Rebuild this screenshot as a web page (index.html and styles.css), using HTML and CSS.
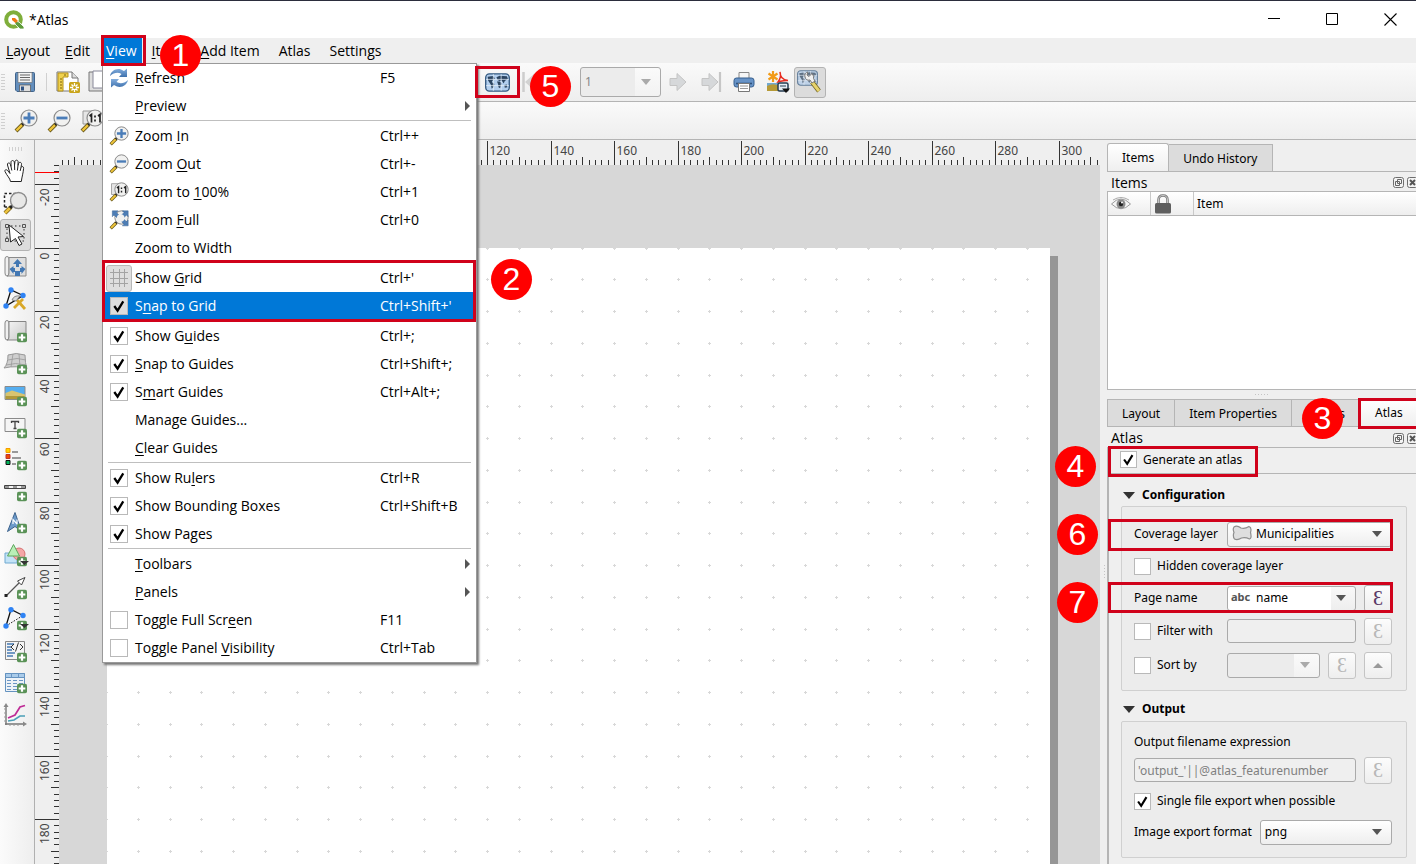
FILE: index.html
```html
<!DOCTYPE html>
<html lang="en">
<head>
<meta charset="utf-8">
<title>*Atlas</title>
<link rel="stylesheet" href="styles.css">
</head>
<body>
<svg class="defs" width="0" height="0" aria-hidden="true">
  <defs>
    <linearGradient id="gPaper" x1="0" y1="0" x2="1" y2="1"><stop offset="0" stop-color="#f4f4f4"/><stop offset="1" stop-color="#c9c9c9"/></linearGradient>
    <linearGradient id="gBlue" x1="0" y1="0" x2="0" y2="1"><stop offset="0" stop-color="#84aede"/><stop offset="1" stop-color="#3f72ad"/></linearGradient>
    <symbol id="plus" viewBox="0 0 9 9"><rect width="9" height="9" rx="2" fill="#5a9257"/><path d="M4.5 1.500v6M1.500 4.500h6" stroke="#fff" stroke-width="2"/></symbol>
    <symbol id="lens" viewBox="0 0 24 24"><path d="M2 22l7-7" stroke="#6b5a1c" stroke-width="4"/><path d="M2.500 21.500l6-6" stroke="#f0c63a" stroke-width="2.400"/><path d="M8 16l3-3" stroke="#222" stroke-width="2.500"/><circle cx="15" cy="9" r="8" fill="#f1f1f0" stroke="#8b8b8b" stroke-width="1.200"/></symbol>
    <symbol id="zin" viewBox="0 0 24 24"><use href="#lens"/><path d="M15 3.500v11M9.500 9h11" stroke="#4b7db8" stroke-width="2.800"/></symbol>
    <symbol id="zout" viewBox="0 0 24 24"><use href="#lens"/><path d="M9.500 9h11" stroke="#4b7db8" stroke-width="2.800"/></symbol>
    <symbol id="z11" viewBox="0 0 24 24"><path d="M3 2h12v13H3z" fill="#e6e6e6" stroke="#999"/><use href="#lens"/><path d="M9.500 7l2-1.500v8M18 7l2-1.500v8M15 6.500v2M15 10.500v2" fill="none" stroke="#222" stroke-width="1.700"/></symbol>
    <symbol id="zfull" viewBox="0 0 24 24"><use href="#lens"/><path d="M4 1h7L9 3l3 3-3 3-3-3-2 2zM23 1v7l-2-2-3 3-3-3 3-3-2-2zM23 19h-7l2-2-3-3 3-3 3 3 2-2z" fill="#4d7db5" stroke="#3f6795" stroke-width=".6"/><circle cx="14" cy="9.500" r="4.500" fill="#f1f1f0"/></symbol>
    <symbol id="refresh" viewBox="0 0 20 20"><path d="M1 8C2 3 7 0 12 1.500l3 1.500 3-2.500V9h-8l2.500-3C9 4 5 4.500 1 8z" fill="url(#gBlue)"/><path d="M19 12c-1 5-6 8-11 6.500L5 17l-3 2.500V11h8l-2.500 3c3.500 2 7.500 1.500 11.500-2z" fill="url(#gBlue)"/></symbol>
    <symbol id="grid" viewBox="0 0 18 18"><path d="M3.500 0v18M9.500 0v18M14.500 0v18M0 3.500h18M0 9.500h18M0 14.500h18" stroke="#a3a3a3"/></symbol>
    <symbol id="map" viewBox="0 0 24 18"><rect x=".7" y=".7" width="22.600" height="16.600" rx="3.500" fill="#b3cfee" stroke="#33587f" stroke-width="1.300"/><path d="M2.500 3.500l5-.7 2 2-2 2.200-1 1.500 2.500 2-1 3-1.500 1.500-1-4-2.500-4zM11 4l3-1.500 7 .5 1 2.500-3 2-1 2.500-2-3-2 .5-2-1zM11.500 8l3 0 1.500 2-1.500 4.500-1.500-1-.5-3zM18.500 11.500l2.500-.5.500 2.500-2.500.5z" fill="#2b4460"/><path d="M8 1v16M15.500 1v16M1 6h22M1 12h22" stroke="#e8f1fa" stroke-width=".7"/></symbol>
    <symbol id="float" viewBox="0 0 11 11"><rect x=".5" y=".5" width="10" height="10" rx="2" fill="#f3f3f3" stroke="#6e6e6e"/><path d="M4.500 2.500h4v4h-4zM2.500 4.500h4v4h-4z" fill="none" stroke="#666"/></symbol>
    <symbol id="shut" viewBox="0 0 11 11"><rect x=".5" y=".5" width="10" height="10" rx="2" fill="#f3f3f3" stroke="#6e6e6e"/><path d="M3 3l5 5M8 3l-5 5" stroke="#555" stroke-width="2"/></symbol>
  </defs>
</svg>

<header class="titlebar">
  <svg class="logo" width="20" height="20" viewBox="0 0 20 20"><circle cx="9.500" cy="9.500" r="7.300" fill="none" stroke="#7fae3b" stroke-width="4"/><path d="M11 11l4 1 5 5v2h-4l-5-5z" fill="#5e9b3c" stroke="#fff" stroke-width=".8"/><path d="M8 8h3l3 3-2.500 2L8 10z" fill="#ee7913"/></svg>
  <span class="titletext">*Atlas</span>
  <div class="winbtns">
    <button aria-label="Minimize"><svg width="13" height="13"><path d="M0 5.500h12" stroke="#000"/></svg></button>
    <button aria-label="Maximize"><svg width="13" height="13"><path d="M.5.5h11v11H.5z" fill="none" stroke="#000"/></svg></button>
    <button aria-label="Close"><svg width="13" height="13"><path d="M.5.5l12 12M12.500.5l-12 12" stroke="#000" stroke-width="1.100"/></svg></button>
  </div>
</header>

<nav class="menubar">
  <button><u>L</u>ayout</button><button><u>E</u>dit</button><button class="open"><u>V</u>iew</button><button><u>I</u>tem</button><button><u>A</u>dd Item</button><button>Atlas</button><button>Settings</button>
  <span class="frame frame-view"></span>
</nav>

<div class="toolbar tb1">
  <div class="tbgroup tbleft">
    <span class="grip"></span>
    <button class="tool" aria-label="Save"><svg width="22" height="22" viewBox="0 0 22 22"><path d="M1.500 2.500q0-1 1-1h17q1 0 1 1v17q0 1-1 1H3l-1.500-1.500z" fill="#648fbd" stroke="#41648c"/><path d="M4 1.500h14v10H4z" fill="#f4f4f4" stroke="#777" stroke-width=".7"/><path d="M6 4h10M6 6.500h10M6 9h10" stroke="#666"/><path d="M5.500 14h11v6.500h-11z" fill="#dedede" stroke="#555" stroke-width=".7"/><path d="M7 15.500h3v4H7z" fill="#2f5384"/></svg></button>
    <span class="vsep"></span>
    <button class="tool" aria-label="New layout"><svg width="24" height="24" viewBox="0 0 24 24"><path d="M1 2h15l6 6v13H1z" fill="#fff" stroke="#777"/><path d="M16 2v6h6" fill="#ddd" stroke="#777"/><path d="M2 3h10v4H7v14H2z" fill="#f0d14d" stroke="#b5921a"/><path d="M4 9h2M4 12h2M4 15h2M4 18h2M9 4v2" stroke="#7a6212"/><rect x="13" y="12" width="11" height="11" rx="1.500" fill="#c9a51b"/><path d="M18.500 13v9M14 17.500h9M15.500 14.500l6 6M21.500 14.500l-6 6" stroke="#fff" stroke-width="1.300"/><circle cx="18.500" cy="17.500" r="1.500" fill="#c9a51b"/></svg></button>
    <button class="tool" aria-label="Duplicate layout"><svg width="24" height="24" viewBox="0 0 24 24"><path d="M1 2h16v19H1z" fill="#ddd" stroke="#777"/><path d="M5 1h16v17H5z" fill="#fff" stroke="#889"/></svg></button>
  </div>
  <div class="tbgroup tbright">
    <button class="tool preview" aria-label="Preview Atlas"><svg width="25" height="19"><use href="#map"/></svg><span class="frame frame-fill"></span></button>
    <button class="tool first" aria-label="First feature"><svg width="34" height="22" viewBox="0 0 34 22"><path d="M1.500 1v20" stroke="#cdcdcd" stroke-width="2.500"/><path d="M3 11L13 2v5h7v8h-7v5z" fill="#d2d2d2"/></svg></button>
    <span class="badge b5">5</span>
    <select class="combo page-no" aria-label="Page" disabled><option>1</option></select>
    <button class="tool next" aria-label="Next feature"><svg width="18" height="20" viewBox="0 0 18 20"><path d="M1 6.500h7v-5L17 10l-9 8.500v-5H1z" fill="#d6d8da" stroke="#c4c4c4"/></svg></button>
    <button class="tool last" aria-label="Last feature"><svg width="21" height="22" viewBox="0 0 21 22"><path d="M1 7.500h7v-5l9 8.500-9 8.500v-5H1z" fill="#d6d8da" stroke="#c4c4c4"/><path d="M19 1v20" stroke="#c6c6c6" stroke-width="2.200"/></svg></button>
    <button class="tool print" aria-label="Print"><svg width="22" height="22" viewBox="0 0 22 22"><path d="M6 1.500h10v7H6z" fill="#f6f6f6" stroke="#888"/><rect x="1" y="7" width="20" height="9" rx="2.500" fill="#6793c7" stroke="#365e8d"/><path d="M3 12.500h16" stroke="#2f527d" stroke-width="1.600"/><path d="M5.500 12.500h11v8h-11z" fill="#fff" stroke="#777"/><path d="M7 15h8M7 17.500h8" stroke="#999"/></svg></button>
    <button class="tool export" aria-label="Export Atlas"><svg width="24" height="24" viewBox="0 0 24 24"><path d="M1 13h14v8H1z" fill="#72a9cf"/><path d="M1 16q7-4 14 1v4H1z" fill="#b69a37"/><path d="M7 1v11M2.500 3.500l9 6M11.500 3.500l-9 6" stroke="#f29b18" stroke-width="2.200"/><path d="M12 12c3-4 3-7 2-10 0 5 3 8 8 8.500-5-.5-7 1-10 1.500z" fill="none" stroke="#e82c20" stroke-width="1.500"/><rect x="12" y="13" width="10" height="8" rx="1.500" fill="#e6edf4" stroke="#253b50" stroke-width="1.500"/><path d="M14 16h6" stroke="#253b50"/><path d="M16 18.500h8L20 23z" fill="#111"/></svg></button>
    <button class="tool settings pressed" aria-label="Atlas settings"><svg width="26" height="24" viewBox="0 0 26 24"><g opacity=".7"><use href="#map" width="21" height="16"/></g><path d="M15 12l7 9" stroke="#716322" stroke-width="4.500"/><path d="M15 12l7 9" stroke="#e7d36c" stroke-width="3"/><path d="M15 3.500l-3 3-2-1.500 1-3q-4 1-3 5t5 3l2 3 3-2-1.500-2.500q1-2-1.500-5z" fill="#f0f0f0" stroke="#777"/></svg></button>
  </div>
</div>

<div class="toolbar tb2">
  <div class="tbgroup">
    <span class="grip"></span>
    <button class="tool" aria-label="Zoom in"><svg width="24" height="24"><use href="#zin"/></svg></button>
    <button class="tool" aria-label="Zoom out"><svg width="24" height="24"><use href="#zout"/></svg></button>
    <button class="tool" aria-label="Zoom to 100%"><svg width="24" height="24"><use href="#z11"/></svg></button>
  </div>
</div>

<main class="workspace">
  <aside class="toolbox">
    <span class="hgrip"></span>
    <button class="side" aria-label="Pan"><svg viewBox="0 0 24 24"><path d="M7.500 22.500C7 19 4 17 2 12.500c-.5-2 1.500-2.500 3-.5L7 14.500 4.500 6c-.5-2.500 2.200-2.800 2.900-.5L8 7.500V3.200c0-2.200 3-2.200 3.300 0L11.500 6l.5-3.500c.4-2 3.200-1.700 3.100.5L15 6.500l.6-2c.8-2 3.200-1.200 2.900.8L18 8.500c.8-1.700 2.800-1 2.600.8-.4 5-1.600 8-2.300 13.200z" fill="#fff" stroke="#222"/><path d="M8 7.500l.8 4M11.500 6l.2 5M15 6.500l-.6 5M18 8.500l-.9 3.500" stroke="#222" fill="none"/></svg></button>
    <button class="side" aria-label="Zoom"><svg viewBox="0 0 24 24"><path d="M1.500 16V2.500H16M1.500 16H9" fill="none" stroke="#222" stroke-width="1.500" stroke-dasharray="2.500 2"/><path d="M2 22l6-6" stroke="#7c641b" stroke-width="4"/><path d="M2 22l5-5" stroke="#edc33e" stroke-width="2.500"/><path d="M7 17l3-3" stroke="#222" stroke-width="3"/><circle cx="15.500" cy="9.500" r="8" fill="#e8e8e7" stroke="#8c8c8c" stroke-width="1.400"/></svg></button>
    <button class="side pressed" aria-label="Select item"><svg viewBox="0 0 24 24"><path d="M3 3h17v15H3z" fill="none" stroke="#333" stroke-dasharray="1.500 2.500"/><path d="M1.500 1.500h3v3h-3zM18.500 1.500h3v3h-3zM1.500 15.500h3v3h-3z" fill="#ddd" stroke="#555"/><path d="M5 2l14.500 11.500-5.500.5 4 7-3 1.500-3.500-7L6.500 19z" fill="#fff" stroke="#222"/></svg></button>
    <button class="side" aria-label="Move item content"><svg viewBox="0 0 24 24"><path d="M2 4q0-2.500 2-2.500T6 4v14q0 3-2 3t-2-3z" fill="#f0f0f0" stroke="#8a8a8a"/><path d="M6 2.500h17v18.500H4q2 0 2-3z" fill="#dfdfdf" stroke="#8a8a8a"/><path d="M14.500 4l4.500 5h-3v3h-3V9h-3zM12 16h5v5h-5zM6.500 14l4-3v2h1.500v4h-1.500v2zM22.500 14l-4-3v2H17v4h1.500v2z" fill="#4378b3"/></svg></button>
    <button class="side" aria-label="Edit nodes"><svg viewBox="0 0 24 24"><path d="M3 19L8 3l12 5.500z" fill="none" stroke="#111" stroke-width="1.300"/><circle cx="3" cy="19" r="2.700" fill="#2f83f4"/><circle cx="8" cy="3" r="2.700" fill="#2f83f4"/><circle cx="20" cy="8.500" r="2.700" fill="#2f83f4"/><path d="M11 21l9-9M14 13l8 9" stroke="#d9a829" stroke-width="2.800"/><path d="M9 13q2-5 8-4l-4 5z" fill="#d8d8d8" stroke="#888"/></svg></button>
    <button class="side" aria-label="Add map"><svg viewBox="0 0 24 24"><path d="M2 4q0-2.500 2-2.500T6 4v14q0 3-2 3t-2-3z" fill="#f0f0f0" stroke="#858585"/><path d="M6 2.500h17v18.500H4q2 0 2-3z" fill="url(#gPaper)" stroke="#858585"/><use href="#plus" x="14" y="13.500" width="10" height="10"/></svg></button>
    <button class="side" aria-label="Add 3D map"><svg viewBox="0 0 24 24"><path d="M1 17q4-4 4-13 8-3 17 0 0 8 2 14-10-4-23-1z" fill="#cfcfcf" stroke="#999"/><path d="M5 9q9-3 18 0M3 14q9-3 20 0M10 3L8 16M16 3l1 13" fill="none" stroke="#999" stroke-width=".8"/><use href="#plus" x="14" y="13.500" width="10" height="10"/></svg></button>
    <button class="side" aria-label="Add picture"><svg viewBox="0 0 24 24"><path d="M2 3.500h20v13H2z" fill="#55aef0" stroke="#8b8b8b"/><path d="M2.500 10L9 7.500l13 4V16H2.500z" fill="#d8c470"/><path d="M2.500 13h19v3h-19z" fill="#b0983a"/><use href="#plus" x="14" y="13.500" width="10" height="10"/></svg></button>
    <button class="side" aria-label="Add label"><svg viewBox="0 0 24 24"><path d="M2 3.500h20v13H2z" fill="#f5f5f5" stroke="#8a8a8a"/><path d="M8.500 8V6.500h7V8M12 6.500v7M10.500 13.500h3" stroke="#444" fill="none" stroke-width="1.300"/><use href="#plus" x="14" y="13.500" width="10" height="10"/></svg></button>
    <button class="side" aria-label="Add legend"><svg viewBox="0 0 24 24"><path d="M3 1.500h4v4H3z" fill="#ffd400" stroke="#f59a00"/><path d="M3 7.500h4v4H3z" fill="#f04d00" stroke="#b33"/><path d="M3 13.500h4v4H3z" fill="#00b45a" stroke="#111"/><path d="M9 5h6M9 11h9M9 17h4" stroke="#999" stroke-width="2"/><use href="#plus" x="14" y="13.500" width="10" height="10"/></svg></button>
    <button class="side" aria-label="Add scale bar"><svg viewBox="0 0 24 24"><path d="M1.500 6.500h21v3h-21z" fill="#f2f2f2" stroke="#444"/><path d="M2 8h4M10 8h4M18 8h4" stroke="#999" stroke-width="2"/><use href="#plus" x="14" y="12.500" width="10" height="10"/></svg></button>
    <button class="side" aria-label="Add north arrow"><svg viewBox="0 0 24 24"><path d="M12 1.500l6.500 19-6.500-5-7.500 5z" fill="#6d9bcb" stroke="#3d638d"/><path d="M10 13V8.500l4 4.500V8.500" fill="none" stroke="#fff" stroke-width="1.200"/><use href="#plus" x="14" y="12.500" width="10" height="10"/></svg></button>
    <button class="side" aria-label="Add shape"><svg viewBox="0 0 24 24"><path d="M2 10h12v10H2z" fill="#c3e3f7" stroke="#71a9d0"/><circle cx="16" cy="11" r="6" fill="#f4a6a6" stroke="#d67272"/><path d="M10.500 1.500l6 11.500h-12z" fill="#b9efb7" stroke="#5da65d"/><use href="#plus" x="14" y="13.500" width="10" height="10"/><path d="M17 18h9l-4.500 4z" fill="#333"/></svg></button>
    <button class="side" aria-label="Add arrow"><svg viewBox="0 0 24 24"><path d="M3 21L17 7" stroke="#555" stroke-width="1.300"/><path d="M1.500 19h3v3h-3z" fill="#222"/><path d="M14.500 6l7.500-3.500L18.500 10z" fill="#fff" stroke="#444"/><use href="#plus" x="14" y="14.500" width="10" height="10"/></svg></button>
    <button class="side" aria-label="Add node item"><svg viewBox="0 0 24 24"><path d="M3 19L8 2.500l12 6" fill="none" stroke="#111" stroke-width="1.300"/><path d="M3 19L20 8.500" stroke="#111" stroke-dasharray="1.500 1.500"/><circle cx="3" cy="19" r="2.700" fill="#2f83f4"/><circle cx="8" cy="2.700" r="2.700" fill="#2f83f4"/><circle cx="20" cy="8.500" r="2.700" fill="#2f83f4"/><use href="#plus" x="14" y="13.500" width="10" height="10"/><path d="M17 17h9l-4.500 4z" fill="#333"/></svg></button>
    <button class="side" aria-label="Add HTML"><svg viewBox="0 0 24 24"><path d="M2.500 2.500h19v18h-19z" fill="#f4f4f4" stroke="#888"/><path d="M4 5h7M4 8h4M4 11h5M4 14h8M4 17h6" stroke="#4679b4" stroke-width="1.400"/><path d="M11 5L8 8l3 3M17 5l3 3-3 3M15.500 3.500l-3 9" fill="none" stroke="#333"/><use href="#plus" x="14" y="13.500" width="10" height="10"/></svg></button>
    <button class="side" aria-label="Add attribute table"><svg viewBox="0 0 24 24"><path d="M2.500 2.500h19v18h-19z" fill="#eef3f8" stroke="#6593c0"/><path d="M2.500 2.500h19v4h-19z" fill="#a9cbea" stroke="#6593c0"/><path d="M4 9.500h4M4 12.500h4M4 15.500h4M4 18.500h4M10 9.500h4M10 12.500h4M10 15.500h4M10 18.500h4M16 9.500h4M16 12.500h4M8.500 2v5M15.500 2v5" stroke="#6b96c4"/><use href="#plus" x="14" y="12.500" width="10" height="10"/></svg></button>
    <button class="side" aria-label="Add elevation profile"><svg viewBox="0 0 24 24"><path d="M3 22V3M2 21h20" stroke="#777" stroke-width="1.400"/><path d="M3 0l2.500 4h-5zM24 21l-4-2.500v5z" fill="#888"/><path d="M1 6h2M1 10h2M1 14h2M1 18h2M7 21v2M11 21v2M15 21v2" stroke="#999"/><path d="M5 15l7-3 5-8 5-1.500" fill="none" stroke="#bf2b96" stroke-width="1.700"/><path d="M5 18l6-1 6-4h5" fill="none" stroke="#4ca0b8" stroke-width="1.600"/></svg></button>
  </aside>

  <section class="view">
    <div class="corner"></div>
    <svg class="ruler" id="hruler" width="100%" height="25"></svg>
    <svg class="ruler" id="vruler" width="24" height="100%"></svg>
    <div class="canvas">
      <div class="sheet"><svg id="dots" width="100%" height="100%"></svg></div>
      <span class="badge b2">2</span>
    </div>
  </section>

  <div class="splitter"><span class="vgrip"></span></div>

  <aside class="dock">
    <div class="tabs"><button class="tab active">Items</button><button class="tab">Undo History</button></div>
    <div class="docktitle"><span>Items</span><svg width="11" height="11"><use href="#float"/></svg><svg width="11" height="11"><use href="#shut"/></svg></div>
    <div class="tree">
      <div class="treehead">
        <span class="cell"><svg width="20" height="14" viewBox="0 0 20 14"><path d="M.5 7Q10-3 19.500 7 10 16.500.5 7z" fill="#f5f5f5" stroke="#999"/><path d="M2 3Q10-2 18 3" fill="none" stroke="#aaa"/><circle cx="10" cy="7" r="4.500" fill="#8a8a8a"/><circle cx="10" cy="7" r="2.200" fill="#222"/><circle cx="11" cy="5.500" r="1" fill="#fff"/></svg></span>
        <span class="cell"><svg width="18" height="20" viewBox="0 0 18 20"><path d="M4.500 10V6q0-4.500 4.500-4.500T13.500 6v4" fill="none" stroke="#777" stroke-width="2.500"/><path d="M4.500 10V6q0-4.500 4.500-4.500T13.500 6v4" fill="none" stroke="#ddd" stroke-width=".8"/><rect x="1" y="9" width="16" height="10.500" rx="1.500" fill="#5f5f5f"/></svg></span>
        <span class="cell name">Item</span>
      </div>
    </div>
    <div class="hsplit"><span></span></div>
    <div class="tabs low"><button class="tab">Layout</button><button class="tab">Item Properties</button><button class="tab">Guides</button><button class="tab active">Atlas</button></div>
    <div class="docktitle low"><span>Atlas</span><svg width="11" height="11"><use href="#float"/></svg><svg width="11" height="11"><use href="#shut"/></svg></div>
    <form class="atlas">
      <div class="generate"><label class="tick"><input type="checkbox" checked>Generate an atlas</label></div>
      <h2 class="head">Configuration</h2>
      <div class="group config">
        <div class="row"><label class="lab" for="layer">Coverage layer</label><span class="pick"><select class="combo" id="layer"><option>Municipalities</option></select><svg width="20" height="16" viewBox="0 0 20 16"><path d="M2 2q3-2 7 1 4 1 8-1.500 3 1 1.500 6 1.500 6-1 6.500-4-2-8-1-4 2.500-7 1-2-3-.5-6.500Q.5 4 2 2z" fill="#dedede" stroke="#8e8e8e" stroke-width="1.200"/></svg></span></div>
        <div class="row"><label class="tick"><input type="checkbox">Hidden coverage layer</label></div>
        <div class="row"><label class="lab" for="pname">Page name</label><span class="pick abc"><select class="combo edit" id="pname"><option>name</option></select><b>abc</b></span><button type="button" class="eps">Ɛ</button></div>
        <div class="row tall"><label class="tick lab"><input type="checkbox">Filter with</label><input class="field" type="text" aria-label="Filter" disabled><button type="button" class="eps" disabled>Ɛ</button></div>
        <div class="row tall"><label class="tick lab"><input type="checkbox">Sort by</label><span class="pick"><select class="combo edit" aria-label="Sort field" disabled><option></option></select></span><button type="button" class="eps" disabled>Ɛ</button><button type="button" class="eps" aria-label="Ascending" disabled><svg width="10" height="5"><path d="M0 5L5 0l5 5z" fill="#999"/></svg></button></div>
      </div>
      <h2 class="head second">Output</h2>
      <div class="group output">
        <label class="row short" for="fname">Output filename expression</label>
        <div class="row short"><input class="field" id="fname" type="text" value="'output_'||@atlas_featurenumber" disabled><button type="button" class="eps" disabled>Ɛ</button></div>
        <div class="row tall"><label class="tick"><input type="checkbox" checked>Single file export when possible</label></div>
        <div class="row short"><label for="fmt">Image export format</label><span class="pick fmt"><select class="combo" id="fmt"><option>png</option></select></span></div>
      </div>
    </form>
    <span class="frame f3"></span><span class="frame f4"></span><span class="frame f6"></span><span class="frame f7"></span>
    <span class="badge b3">3</span><span class="badge b4">4</span><span class="badge b6">6</span><span class="badge b7">7</span>
  </aside>
</main>

<div class="menu" role="menu">
  <div class="mgroup">
    <button class="mi"><svg width="20" height="20"><use href="#refresh"/></svg><span><u>R</u>efresh</span><kbd>F5</kbd></button>
    <button class="mi sub"><i></i><span><u>P</u>review</span></button>
  </div>
  <div class="mgroup">
    <button class="mi"><svg width="20" height="20"><use href="#zin"/></svg><span>Zoom <u>I</u>n</span><kbd>Ctrl++</kbd></button>
    <button class="mi"><svg width="20" height="20"><use href="#zout"/></svg><span>Zoom <u>O</u>ut</span><kbd>Ctrl+-</kbd></button>
    <button class="mi"><svg width="20" height="20"><use href="#z11"/></svg><span>Zoom to <u>1</u>00%</span><kbd>Ctrl+1</kbd></button>
    <button class="mi"><svg width="20" height="20"><use href="#zfull"/></svg><span>Zoom <u>F</u>ull</span><kbd>Ctrl+0</kbd></button>
    <button class="mi"><i></i><span>Zoom to Width</span></button>
  </div>
  <div class="mgroup">
    <button class="mi"><i class="gridbox"><svg width="18" height="18"><use href="#grid"/></svg></i><span>Show <u>G</u>rid</span><kbd>Ctrl+'</kbd></button>
    <label class="mi hot"><input type="checkbox" checked><span>S<u>n</u>ap to Grid</span><kbd>Ctrl+Shift+'</kbd></label>
    <span class="frame frame-grid"></span>
  </div>
  <div class="mgroup">
    <label class="mi"><input type="checkbox" checked><span>Show G<u>u</u>ides</span><kbd>Ctrl+;</kbd></label>
    <label class="mi"><input type="checkbox" checked><span><u>S</u>nap to Guides</span><kbd>Ctrl+Shift+;</kbd></label>
    <label class="mi"><input type="checkbox" checked><span>S<u>m</u>art Guides</span><kbd>Ctrl+Alt+;</kbd></label>
    <button class="mi"><i></i><span>Manage Guides...</span></button>
    <button class="mi"><i></i><span><u>C</u>lear Guides</span></button>
  </div>
  <div class="mgroup">
    <label class="mi"><input type="checkbox" checked><span>Show Ru<u>l</u>ers</span><kbd>Ctrl+R</kbd></label>
    <label class="mi"><input type="checkbox" checked><span>Show Bounding Boxes</span><kbd>Ctrl+Shift+B</kbd></label>
    <label class="mi"><input type="checkbox" checked><span>Show Pages</span></label>
  </div>
  <div class="mgroup">
    <button class="mi sub"><i></i><span><u>T</u>oolbars</span></button>
    <button class="mi sub"><i></i><span><u>P</u>anels</span></button>
    <label class="mi"><input type="checkbox"><span>Toggle Full Scr<u>e</u>en</span><kbd>F11</kbd></label>
    <label class="mi"><input type="checkbox"><span>Toggle Panel <u>V</u>isibility</span><kbd>Ctrl+Tab</kbd></label>
  </div>
</div>
<span class="badge b1">1</span>
<script src="rulers.js"></script>
</body>
</html>
```
FILE: styles.css
```css
* { box-sizing: border-box; }
body { margin: 0; height: 100vh; overflow: hidden; position: relative; display: flex; flex-direction: column; background: #efefef; color: #000; font: 12px/16px "Noto Sans", sans-serif; }
button, select, input { font: inherit; color: inherit; margin: 0; }
button { background: none; border: 0; padding: 0; }
svg { display: block; }
.defs { position: absolute; }

.titlebar { height: 38px; flex: none; display: flex; align-items: center; gap: 5px; padding-left: 4px; background: #fff; border-top: 1px solid #2b2d3c; font: 14px/20px "Open Sans", sans-serif; }
.winbtns { margin-left: auto; display: flex; gap: 6px; }
.winbtns button { width: 52px; height: 37px; display: grid; place-items: center; }

.menubar { position: relative; height: 25px; flex: none; display: flex; font: 14px/20px "Open Sans", sans-serif; }
.menubar button { padding: 0 9px 0 6px; }
.menubar .open { background: #0078d7; color: #fff; margin: 0 4px; padding: 0 5px 0 3px; }
.menubar .open ~ button { padding-right: 13px; }
u { text-underline-offset: 2px; text-decoration-thickness: 1px; }

.toolbar { flex: none; display: flex; border-bottom: 1px solid #b4b4b4; background: linear-gradient(#fafafa, #eee); }
.tb1 { height: 39px; }
.tb2 { height: 38px; }
.tbgroup { position: relative; display: flex; align-items: center; }
.tbleft { width: 475px; flex: none; }
.tool { height: 30px; flex: none; display: grid; place-items: center; }
.grip { width: 4px; height: 18px; margin: 0 9px 0 1px; background: radial-gradient(circle, #aaa 1px, transparent 1px) 0 0 / 2px 3px; opacity: .5; }
.vsep { width: 1px; height: 18px; margin: 0 9px 0 10px; background: #d0d0d0; }
.tbleft .tool + .tool { margin-left: 8px; }
.tb2 .tool { margin-right: 9px; }
.preview { position: relative; width: 45px; }
.first { margin-left: 2px; }
.page-no { margin-left: 24px; }
.next { margin-left: 8px; }
.last { margin-left: 14px; }
.print { margin-left: 11px; }
.export { margin-left: 11px; }
.settings { width: 32px; height: 31px; margin-left: 4px; }
.pressed { background: #dcdcdc; border: 1px solid #b3b3b3; border-radius: 3px; }

.workspace { flex: 1; min-height: 0; display: grid; grid-template-columns: 35px 1fr 7px 309px; }
.toolbox { border-right: 1px solid #b0b0b0; background: linear-gradient(90deg, #fbfbfb, #eee); overflow: hidden; }
.hgrip { display: block; width: 16px; height: 4px; margin: 7px 0 4px 8px; background: radial-gradient(circle, #aaa 1px, transparent 1px) 0 0 / 3px 2px; opacity: .5; }
.side { display: flex; align-items: center; width: 31px; height: 32px; padding-left: 3px; }
.side svg { width: 24px; height: 24px; flex: none; overflow: visible; }

.view { display: grid; grid-template: 25px 1fr / 24px 1fr; min-width: 0; min-height: 0; overflow: hidden; }
.ruler { overflow: hidden; fill: #444; font: 12px "Noto Sans", sans-serif; }
.ruler line { stroke: #333; }
.ruler .cursor { stroke: #f00; }
.canvas { position: relative; background: #d7d7d7; overflow: hidden; }
.sheet { position: absolute; left: 48px; top: 83px; width: 943px; height: 667px; background: #fff; box-shadow: 8px 8px 0 #969696; }
#dots { overflow: hidden; stroke: #d8d8d8; }

.splitter { display: flex; flex-direction: column; justify-content: center; }
.vgrip { width: 3px; height: 16px; margin: 140px 0 0 3px; background: radial-gradient(circle, #999 1px, transparent 1px) 0 0 / 3px 3px; opacity: .5; }

.dock { position: relative; display: flex; flex-direction: column; min-width: 0; clip-path: inset(0 0 0 -60px); }
.tabs { display: flex; align-items: flex-end; width: 100%; height: 29px; margin-top: 3px; flex: none; overflow: hidden; border-bottom: 1px solid #b5b5b5; }
.tab { flex: none; height: 27px; padding: 2px 14px 0; border: 1px solid #b5b5b5; border-bottom: 0; border-left: 0; background: #dcdcdc; }
.tab:first-child { border-left: 1px solid #b5b5b5; }
.tab.active { height: 28px; padding-top: 0; background: linear-gradient(#fff, #efefef); border-radius: 3px 3px 0 0; }
.tabs.low { height: 28px; margin: 0; }
.low .tab.active { padding-left: 15px; }
.docktitle { flex: none; display: flex; align-items: center; gap: 3px; height: 19px; padding: 2px 0 0 4px; margin-right: -2px; overflow: hidden; font: 14px/18px "Open Sans", sans-serif; }
.docktitle.low { height: 20px; }
.docktitle span { flex: 1; }
.docktitle svg { flex: none; }
.tree { height: 199px; flex: none; background: #fff; border: 1px solid #b5b5b5; border-right: 0; }
.treehead { display: flex; height: 24px; background: linear-gradient(#fff, #eee); border-bottom: 1px solid #b5b5b5; }
.cell { width: 43px; padding-left: 3px; display: flex; align-items: center; border-right: 1px solid #c9c9c9; }
.cell.name { border: 0; }
.hsplit { height: 9px; flex: none; display: grid; place-items: center; }
.hsplit span { width: 16px; height: 3px; background: radial-gradient(circle, #999 1px, transparent 1px) 0 0 / 3px 3px; opacity: .5; }

.atlas { flex: 1; min-height: 0; overflow: hidden; border-left: 2px solid #b5b5b5; border-top: 1px solid #b5b5b5; }
.generate { display: flex; height: 26px; padding: 3px 0 0 11px; border-bottom: 1px solid #b5b5b5; align-items: flex-start; }
.tick { display: flex; align-items: center; gap: 6px; }
input[type="checkbox"] { appearance: none; flex: none; width: 17px; height: 17px; background: #fff; border: 1px solid #b9b9b9; }
input[type="checkbox"]:checked { background: #fff url("data:image/svg+xml,%3Csvg xmlns='http://www.w3.org/2000/svg' viewBox='0 0 17 17'%3E%3Cpath d='M3.500 8.500L7 13.500 13 3.500' fill='none' stroke='%23000' stroke-width='2.400'/%3E%3C/svg%3E") center / 100%; }
.head { display: flex; align-items: center; gap: 8px; height: 16px; margin: 13px 0 3px 14px; font: 700 12px/16px "Noto Sans", sans-serif; }
.head::before { content: ""; border: 6px solid transparent; border-top: 7px solid #333; border-bottom: 0; margin-right: -1px; }
.head.second { margin: 10px 0 4px 14px; }
.group { margin: 0 9px 0 12px; padding: 11px 14px 8px 12px; border: 1px solid #d0d0d0; border-radius: 2px; background: #ececec; }
.row { display: flex; align-items: center; gap: 8px; height: 32px; }
.row.tall { height: 34px; }
.row.short { height: 28px; }
.lab { width: 85px; flex: none; }
.pick { position: relative; flex: 1; display: flex; min-width: 0; }
.pick svg { position: absolute; left: 5px; top: 3px; }
.pick b { position: absolute; left: 4px; top: 3px; color: #555; font-size: 11px; }
.config .pick .combo { padding-left: 28px; }
.combo { appearance: none; width: 100%; height: 25px; padding: 0 4px; border: 1px solid #aaa; border-radius: 3px; background: url("data:image/svg+xml,%3Csvg xmlns='http://www.w3.org/2000/svg' viewBox='0 0 10 6'%3E%3Cpath d='M0 0h10L5 6z' fill='%23555'/%3E%3C/svg%3E") right 9px center / 10px 6px no-repeat, linear-gradient(#fff, #eee); opacity: 1; }
.combo.edit { background: url("data:image/svg+xml,%3Csvg xmlns='http://www.w3.org/2000/svg' viewBox='0 0 10 6'%3E%3Cpath d='M0 0h10L5 6z' fill='%23555'/%3E%3C/svg%3E") right 9px center / 10px 6px no-repeat, linear-gradient(#f8f8f8, #eee) right / 24px 100% no-repeat, #fff; }
.combo:disabled { color: #888; background: url("data:image/svg+xml,%3Csvg xmlns='http://www.w3.org/2000/svg' viewBox='0 0 10 6'%3E%3Cpath d='M0 0h10L5 6z' fill='%23aaa'/%3E%3C/svg%3E") right 9px center / 10px 6px no-repeat, linear-gradient(#fafafa, #f2f2f2) right / 25px 100% no-repeat, #ececec; }
.combo.page-no { width: 81px; height: 30px; }
.field { flex: 1; min-width: 0; height: 24px; padding: 0 3px; border: 1px solid #aaa; border-radius: 3px; background: #efefef; color: #808080; }
.eps { flex: none; display: grid; place-items: center; width: 28px; height: 27px; border: 1px solid #b0b0b0; border-radius: 3px; background: linear-gradient(#fcfcfc, #eee); color: #5a3a66; font: 20px/20px "Liberation Serif", "DejaVu Serif", serif; }
.eps:disabled { color: #b8b8b8; border-color: #c4c4c4; }
.output { padding: 6px 14px 11px 12px; }

.menu { position: absolute; left: 102px; top: 63px; width: 375px; background: #fff; border: 1px solid #999; box-shadow: 2px 2px 2px #777; font: 14px/20px "Open Sans", sans-serif; }
.mgroup { position: relative; }
.mgroup + .mgroup { padding-top: 2px; background: linear-gradient(#bfbfbf, #bfbfbf) 5px 0 / 363px 1px no-repeat; }
.mi { display: grid; grid-template-columns: 18px 238px 1fr; column-gap: 7px; align-items: center; width: 100%; height: 28px; padding-left: 7px; text-align: left; position: relative; }
.mi kbd { font: inherit; }
.mi > svg { margin-left: -1px; }
.mi input[type="checkbox"] { width: 18px; height: 18px; }
.hot { background: #0078d7; color: #fff; }
.mi.hot input[type="checkbox"] { background-color: #ddd; }
.sub::after { content: ""; position: absolute; right: 6px; top: 9px; border: 5px solid transparent; border-left: 5px solid #555; border-right: 0; }
.gridbox { display: grid; place-items: center; width: 26px; height: 27px; margin-left: -4px; background: #dedede; border: 1px solid #b8b8b8; border-radius: 3px; }

.frame { position: absolute; border: 3px solid #d0021b; pointer-events: none; z-index: 2; }
.frame-view { left: 101px; top: -3px; width: 45px; height: 31px; z-index: 5; }
.frame-fill { inset: -1px 0; }
.frame-grid { left: -1px; top: -2px; width: 374px; height: 62px; }
.f3 { left: 251px; right: -3px; top: 258px; height: 31px; }
.f4 { left: 1px; top: 306px; width: 150px; height: 31px; }
.f6 { left: 1px; top: 379px; width: 285px; height: 32px; }
.f7 { left: 1px; top: 442px; width: 285px; height: 31px; }

.badge { position: absolute; z-index: 6; width: 41px; height: 41px; border-radius: 50%; background: #f00; color: #fff; font: 500 32px/41px "Liberation Sans", sans-serif; text-align: center; }
.b1 { left: 160px; top: 35px; }
.b2 { left: 432px; top: 94px; }
.b3 { left: 195px; top: 258px; }
.b4 { left: -52px; top: 306px; }
.b5 { left: 55px; top: 3px; }
.b6 { left: -50px; top: 374px; }
.b7 { left: -50px; top: 442px; }
```
FILE: rulers.js
```js
const SCALE = 3.175;
const NS = "http://www.w3.org/2000/svg";
const h = document.getElementById("hruler");
const v = document.getElementById("vruler");
const dots = document.getElementById("dots");

function add(parent, tag, attrs, text) {
  const el = document.createElementNS(NS, tag);
  for (const key in attrs) el.setAttribute(key, attrs[key]);
  if (text !== undefined) el.textContent = text;
  parent.appendChild(el);
  return el;
}

function tickLength(unit, full) {
  if (unit % 20 === 0) return full;
  return unit % 10 === 0 ? 8 : 5;
}

function drawRulers() {
  h.replaceChildren();
  v.replaceChildren();
  const width = h.getBoundingClientRect().width;
  const height = v.getBoundingClientRect().height;

  for (let u = -14; 47.5 + u * SCALE < width; u += 2) {
    const x = Math.floor(47.5 + u * SCALE) + 0.5;
    add(h, "line", { x1: x, x2: x, y1: 25 - tickLength(u, 24), y2: 25 });
    if (u % 20 === 0 && x + 24 < width) add(h, "text", { x: x + 2, y: 15 }, u);
  }

  for (let u = -26; 83 + u * SCALE < height; u += 2) {
    const y = Math.floor(83 + u * SCALE) + 0.5;
    add(v, "line", { y1: y, y2: y, x1: 24 - tickLength(u, 24), x2: 24 });
    if (u % 20 === 0 && y + 26 < height) {
      add(v, "text", { transform: `translate(14 ${y + 4}) rotate(-90)`, "text-anchor": "end" }, u);
    }
  }
  add(v, "line", { class: "cursor", x1: 0, x2: 24, y1: 7.5, y2: 7.5 });
}

let d = "";
for (let i = 0; i <= 29; i++) {
  for (let j = 0; j <= 21; j++) {
    const x = Math.floor(i * 10 * SCALE - 0.5);
    const y = Math.floor(j * 10 * SCALE);
    d += `M${x - 1} ${y + 0.5}h3M${x + 0.5} ${y - 1}v3`;
  }
}
add(dots, "path", { d });

drawRulers();
window.addEventListener("resize", drawRulers);
```
